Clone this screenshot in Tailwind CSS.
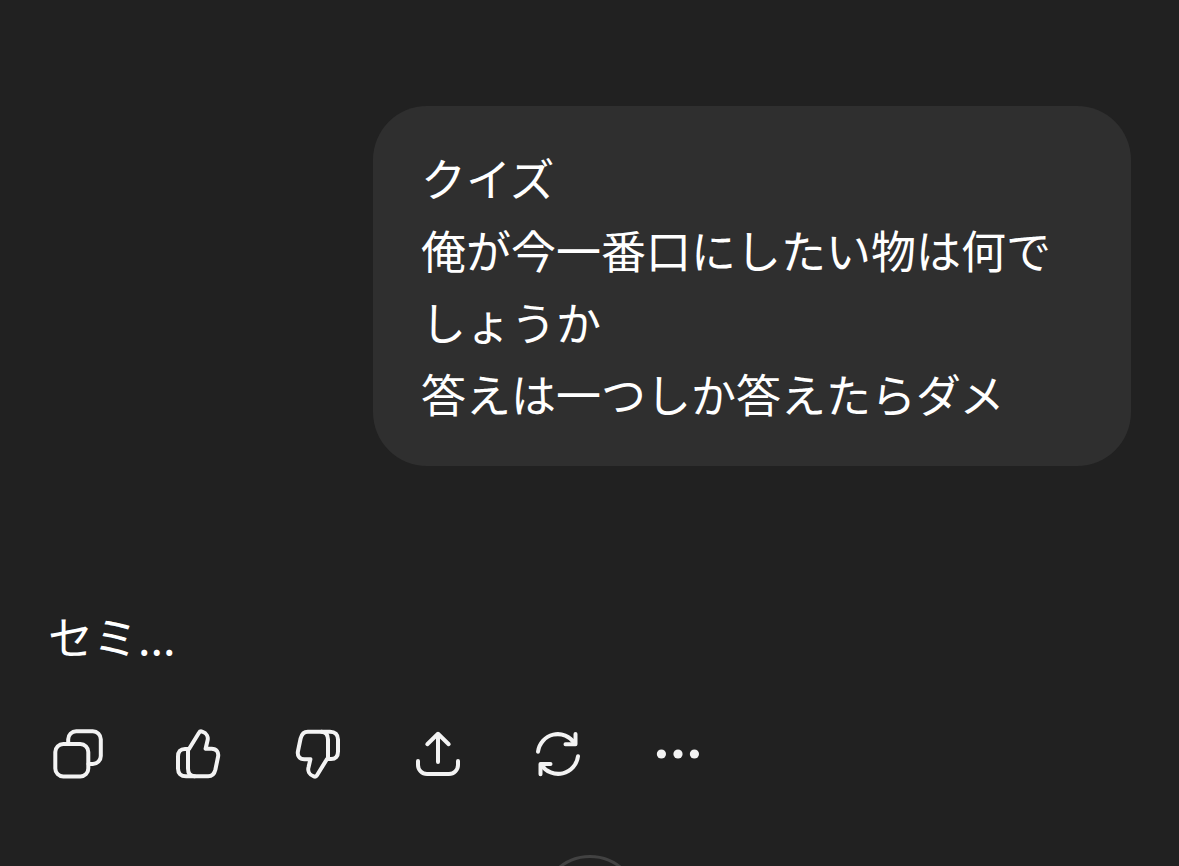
<!DOCTYPE html>
<html lang="ja">
<head>
    <meta charset="UTF-8">
    <meta name="viewport" content="width=device-width, initial-scale=1.0">
    <title>クイズ</title>
    <script src="https://cdn.jsdelivr.net/npm/@tailwindcss/browser@4"></script>
</head>
<body class="bg-[#212121] text-white font-['Noto_Sans_CJK_JP',sans-serif] text-[45px] leading-[72px]">

    <main class="min-h-screen px-12 pt-[106px] flex flex-col">

        <!-- User message -->
        <div class="self-end w-[70%] bg-[#2f2f2f] rounded-[54px] px-12 py-9">
            <p>クイズ</p>
            <p>俺が今一番口にしたい物は何でしょうか</p>
            <p>答えは一つしか答えたらダメ</p>
        </div>

        <!-- Reply -->
        <p class="mt-[134px]">セミ...</p>

        <!-- Actions -->
        <div class="mt-[52px] flex gap-[60px] text-[#f3f3f3]">
            <button type="button" aria-label="コピー">
                <svg class="size-[60px]" viewBox="0 0 60 60" fill="none" stroke="currentColor" stroke-width="4" stroke-linecap="round" stroke-linejoin="round">
                    <rect x="7.3" y="20" width="33" height="32.4" rx="8"/>
                    <path d="M20.2 19.5V15.3a8 8 0 0 1 8-8h16.6a8 8 0 0 1 8 8v16.6a8 8 0 0 1-8 8h-4.3"/>
                </svg>
            </button>
            <button type="button" aria-label="良い回答">
                <svg class="size-[60px]" viewBox="0 0 60 60" fill="none" stroke="currentColor" stroke-width="4" stroke-linecap="round" stroke-linejoin="round">
                    <path d="M21 25L31 8.8C31.8 7.4 32.8 7.1 34.2 7.6C38.6 9 40.6 13 39.4 17L37.6 24.8H43.6C48.6 24.8 51 28.4 50 33L47.4 45.5C46.4 49.8 44.2 52.3 40.1 52.3H18C13 52.3 10 49.4 10 44.4V32.6C10 27.6 12.4 25 17 25H21Z"/>
                    <path d="M20 26.5V44.5C20 49 22.3 52 26.5 52.3"/>
                </svg>
            </button>
            <button type="button" aria-label="良くない回答">
                <svg class="size-[60px] rotate-180" viewBox="0 0 60 60" fill="none" stroke="currentColor" stroke-width="4" stroke-linecap="round" stroke-linejoin="round">
                    <path d="M21 25L31 8.8C31.8 7.4 32.8 7.1 34.2 7.6C38.6 9 40.6 13 39.4 17L37.6 24.8H43.6C48.6 24.8 51 28.4 50 33L47.4 45.5C46.4 49.8 44.2 52.3 40.1 52.3H18C13 52.3 10 49.4 10 44.4V32.6C10 27.6 12.4 25 17 25H21Z"/>
                    <path d="M20 26.5V44.5C20 49 22.3 52 26.5 52.3"/>
                </svg>
            </button>
            <button type="button" aria-label="共有">
                <svg class="size-[60px]" viewBox="0 0 60 60" fill="none" stroke="currentColor" stroke-width="4" stroke-linecap="round" stroke-linejoin="round">
                    <path d="M30 38V10M19.3 20.2L30 9.8L40.7 20.2"/>
                    <path d="M10 37V41a9 9 0 0 0 9 9H41a9 9 0 0 0 9-9V37"/>
                </svg>
            </button>
            <button type="button" aria-label="再生成">
                <svg class="size-[60px]" viewBox="0 0 60 60" fill="none" stroke="currentColor" stroke-width="4" stroke-linecap="round" stroke-linejoin="round">
                    <path d="M10 27.8A20 20 0 0 1 46.6 19.2"/>
                    <path d="M47.5 10V20.2H37.5"/>
                    <path d="M50 32.2A20 20 0 0 1 13.4 40.8"/>
                    <path d="M12.5 50.2V40H22.5"/>
                </svg>
            </button>
            <button type="button" aria-label="その他">
                <svg class="size-[60px]" viewBox="0 0 60 60" fill="currentColor">
                    <circle cx="13.4" cy="30" r="4.6"/>
                    <circle cx="30" cy="30" r="4.6"/>
                    <circle cx="46.4" cy="30" r="4.6"/>
                </svg>
            </button>
        </div>
    </main>

    <!-- Scroll to bottom, peeking over the lower edge -->
    <button type="button" aria-label="一番下へ" class="fixed left-1/2 -translate-x-1/2 -bottom-[89px] size-[100px] rounded-full border-3 border-[#424242] bg-[#212121]"></button>

</body>
</html>
